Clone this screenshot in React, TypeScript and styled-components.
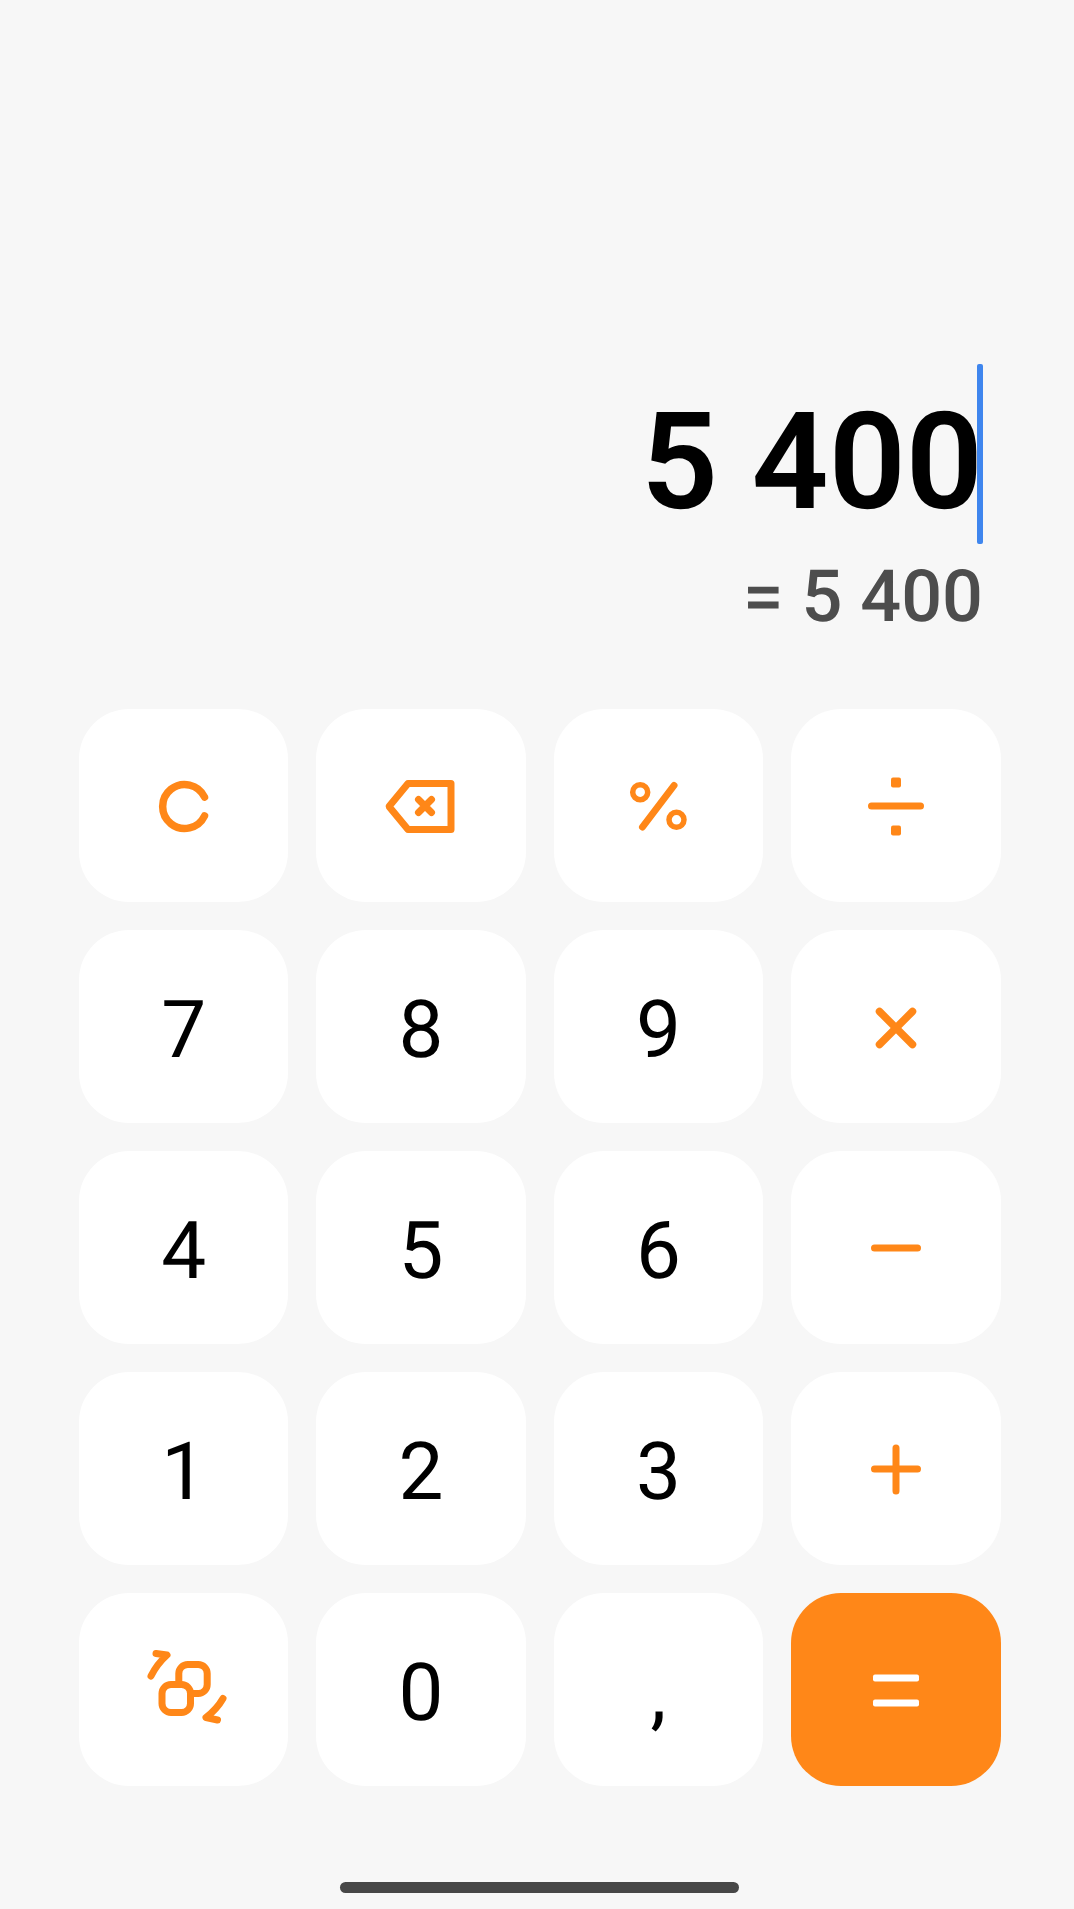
import React from 'react';
import styled, { createGlobalStyle } from 'styled-components';

const ORANGE = '#ff8718';

const GlobalStyle = createGlobalStyle`
  html, body {
    margin: 0;
    padding: 0;
    background: #f7f7f7;
  }
  * {
    box-sizing: border-box;
  }
`;

const Page = styled.div`
  width: 1074px;
  height: 1909px;
  display: flex;
  flex-direction: column;
  align-items: stretch;
  background: #f7f7f7;
  font-family: Roboto, 'Liberation Sans', sans-serif;
  text-rendering: geometricPrecision;
  overflow: hidden;
`;

const Display = styled.div`
  height: 709px;
  padding: 364px 91px 0 0;
  display: flex;
  flex-direction: column;
  align-items: flex-end;
`;

const ExpressionRow = styled.div`
  display: flex;
  align-items: stretch;
  height: 180px;
`;

const Expression = styled.div`
  padding-top: 8px;
  font-size: 135px;
  font-weight: 600;
  line-height: 180px;
  color: #000;
  white-space: nowrap;
`;

const Caret = styled.div`
  width: 6px;
  margin-left: -6px;
  border-radius: 2px;
  background: #3f86ee;
`;

const Result = styled.div`
  margin-top: 11px;
  font-size: 72px;
  font-weight: 500;
  line-height: 84px;
  color: #4d4d4d;
  white-space: nowrap;
`;

const Keypad = styled.div`
  margin: 0 73.5px 0 79px;
  display: grid;
  grid-template-columns: repeat(4, 1fr);
  grid-auto-rows: 193px;
  gap: 28px;
`;

const Key = styled.button<{ $primary?: boolean }>`
  display: flex;
  align-items: center;
  justify-content: center;
  padding: 0;
  border: none;
  border-radius: 50px;
  background: ${({ $primary }) => ($primary ? ORANGE : '#fff')};
  color: #000;
  font-family: inherit;
  font-size: 80px;
  font-weight: 400;
  line-height: 1;
  text-rendering: geometricPrecision;
`;

const Digit = styled.span`
  padding-top: 6px;
`;

const Icon = styled.svg.attrs({ viewBox: '0 0 120 120' })<{ $weight?: number }>`
  width: 120px;
  height: 120px;
  fill: none;
  stroke: ${ORANGE};
  stroke-width: ${({ $weight = 7 }) => $weight};
  stroke-linecap: round;
  stroke-linejoin: round;
`;

const HomeBar = styled.div`
  width: 399px;
  height: 11px;
  margin: 96px 0 0 340px;
  border-radius: 6px;
  background: #474747;
`;

const ClearIcon = () => (
  <Icon $weight={7.5}>
    <path d="M80.5 51 A22 22 0 1 0 80.5 70" />
  </Icon>
);

const BackspaceIcon = () => (
  <Icon>
    <path d="M47 37.5 H90 V83.5 H47 L28 60.5 Z" />
    <path d="M57.5 53.5 L70.5 66.5 M70.5 53.5 L57.5 66.5" />
  </Icon>
);

const PercentIcon = () => (
  <Icon $weight={5.5}>
    <circle cx={42.2} cy={46.2} r={7.5} />
    <circle cx={78.5} cy={73.8} r={7.5} />
    <path d="M76 39.5 L44.5 81" style={{ strokeWidth: 7 }} />
  </Icon>
);

const DivideIcon = () => (
  <Icon>
    <path d="M35.5 60 H84.5" />
    <rect x={55} y={31.5} width={10} height={10} rx={2} fill={ORANGE} stroke="none" />
    <rect x={55} y={79.5} width={10} height={10} rx={2} fill={ORANGE} stroke="none" />
  </Icon>
);

const TimesIcon = () => (
  <Icon $weight={7.5}>
    <path d="M43.5 44.5 L76.5 77.5 M76.5 44.5 L43.5 77.5" />
  </Icon>
);

const MinusIcon = () => (
  <Icon>
    <path d="M38.5 60 H81.5" />
  </Icon>
);

const PlusIcon = () => (
  <Icon>
    <path d="M38.5 60 H81.5 M60 39 V82" />
  </Icon>
);

const EqualsIcon = () => (
  <Icon>
    <rect x={37} y={44.5} width={46} height={7} rx={2} fill="#fff" stroke="none" />
    <rect x={37} y={69.5} width={46} height={7} rx={2} fill="#fff" stroke="none" />
  </Icon>
);

const SwapIcon = () => (
  <Icon>
    <rect x={54.8} y={34.5} width={28.4} height={29} rx={9} fill="#fff" />
    <rect x={38} y={54.5} width={28.5} height={28} rx={9} fill="#fff" />
    <path d="M27 46 Q33 34 43 25 L32 23.5" />
    <path d="M99 68.5 Q93 79 82 87.5 L93.5 90" />
  </Icon>
);

const keys: { id: string; content: React.ReactNode; primary?: boolean }[] = [
  { id: 'clear', content: <ClearIcon /> },
  { id: 'back', content: <BackspaceIcon /> },
  { id: 'percent', content: <PercentIcon /> },
  { id: 'divide', content: <DivideIcon /> },
  { id: '7', content: <Digit>7</Digit> },
  { id: '8', content: <Digit>8</Digit> },
  { id: '9', content: <Digit>9</Digit> },
  { id: 'times', content: <TimesIcon /> },
  { id: '4', content: <Digit>4</Digit> },
  { id: '5', content: <Digit>5</Digit> },
  { id: '6', content: <Digit>6</Digit> },
  { id: 'minus', content: <MinusIcon /> },
  { id: '1', content: <Digit>1</Digit> },
  { id: '2', content: <Digit>2</Digit> },
  { id: '3', content: <Digit>3</Digit> },
  { id: 'plus', content: <PlusIcon /> },
  { id: 'swap', content: <SwapIcon /> },
  { id: '0', content: <Digit>0</Digit> },
  { id: 'comma', content: <Digit>,</Digit> },
  { id: 'equals', content: <EqualsIcon />, primary: true },
];

const App: React.FC = () => (
  <Page>
    <GlobalStyle />
    <Display>
      <ExpressionRow>
        <Expression>5 400</Expression>
        <Caret />
      </ExpressionRow>
      <Result>= 5 400</Result>
    </Display>
    <Keypad>
      {keys.map((key) => (
        <Key key={key.id} $primary={key.primary}>
          {key.content}
        </Key>
      ))}
    </Keypad>
    <HomeBar />
  </Page>
);

export default App;
